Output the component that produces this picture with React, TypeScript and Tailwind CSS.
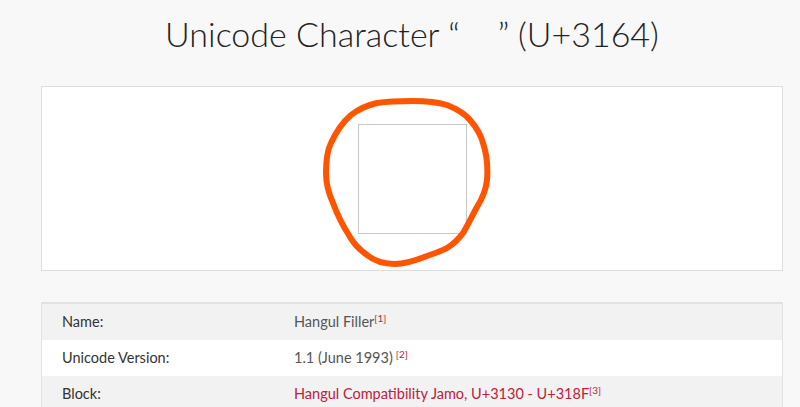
export default function App() {
  const rows = [
    { label: 'Name:', value: 'Hangul Filler', ref: '1', link: false, bg: 'bg-[#f2f2f2]' },
    { label: 'Unicode Version:', value: '1.1 (June 1993)', ref: '2', link: false, bg: 'bg-white', gap: true },
    { label: 'Block:', value: 'Hangul Compatibility Jamo, U+3130 - U+318F', ref: '3', link: true, bg: 'bg-[#f2f2f2]' },
  ];

  return (
    <div className="min-h-[407px] bg-[#f8f8f8] font-['Lato',sans-serif] overflow-hidden">
      <div className="ml-[41px] w-[742px]">
        {/* Title */}
        <h1 className="pt-[13px] h-[86px] text-center text-[34px] leading-[42px] font-light text-[#222]">
          Unicode Character “<span className="inline-block w-[38px]">ㅤ</span>” (U+3164)
        </h1>

        {/* Glyph preview */}
        <div className="relative h-[185px] border border-[#dcdcdc] bg-white flex items-center justify-center">
          <div className="w-[109px] h-[110px] border border-[#c8c8c8]" />
          <svg
            className="absolute left-[-1px] top-[-1px] overflow-visible"
            width="743"
            height="185"
            viewBox="41 86 743 185"
          >
            <path
              d="M427 256 C412 262 402 264 395 264 C382 264 373 260 367 255 C360 250 354 244 350 237 C343 226 337 214 333 203 C328 192 326 183 326 173 C326 162 327 151 331 143 C336 132 343 122 351 115 C360 108 368 105 377 103 C390 101 402 101 413 101 C425 101 437 102 447 105 C457 109 465 114 470 120 C476 127 481 135 483 143 C487 155 488 168 487 180 C486 190 482 199 477 207 C472 216 468 225 463 233 C458 240 452 245 447 248 C440 252 432 254 424 257"
              fill="none"
              stroke="#ff5500"
              strokeWidth="6"
              strokeLinecap="round"
              strokeLinejoin="round"
            />
          </svg>
        </div>

        {/* Info table */}
        <div className="mt-[31px] border-t-2 border-x border-[#e2e2e2] text-[14.5px]">
          {rows.map((r) => (
            <div key={r.label} className={`flex items-center h-[36px] ${r.bg}`}>
              <div className="w-[252px] pl-[20px] text-[#333]">{r.label}</div>
              <div className={r.link ? 'text-[#c0203a]' : 'text-[#555]'}>
                {r.value}
                <sup className={`text-[10px] text-[#c0203a] ${r.gap ? 'ml-[3px]' : ''}`}>[{r.ref}]</sup>
              </div>
            </div>
          ))}
        </div>
      </div>
    </div>
  );
}
